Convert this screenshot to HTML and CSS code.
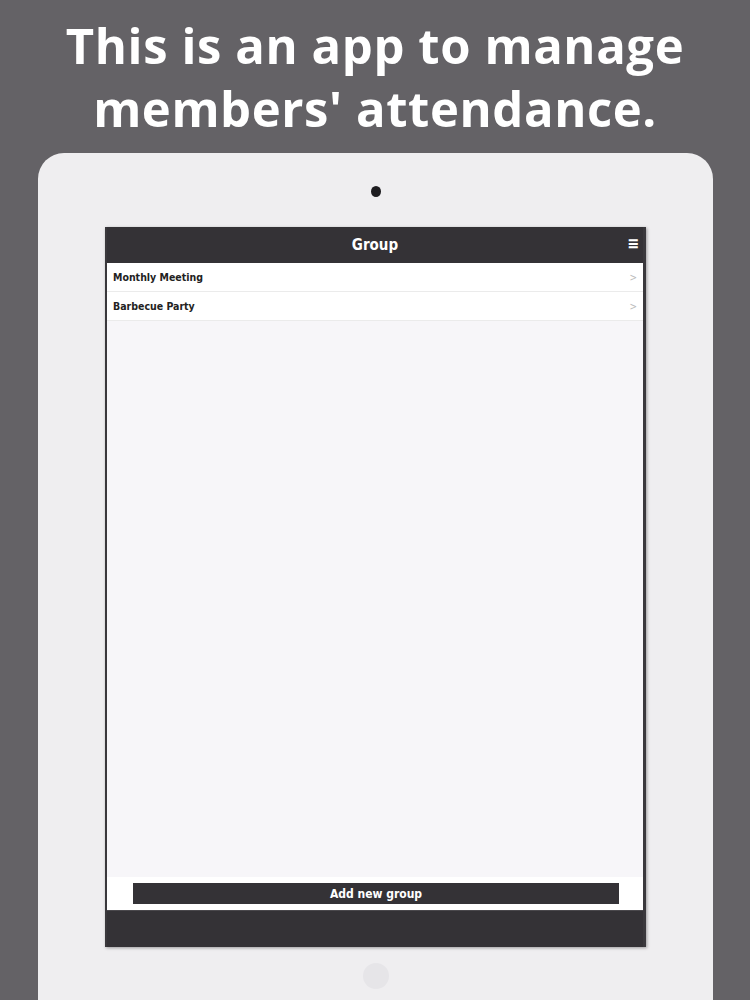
FILE: index.html
```html
<!DOCTYPE html>
<html lang="en">
<head>
    <meta charset="UTF-8">
    <title>Attendance - Group</title>
    <link rel="stylesheet" href="styles.css">
</head>
<body>
    <h1 class="caption">This is an app to manage<br>members' attendance.</h1>

    <div class="device">
        <div class="camera"></div>

        <div class="screen">
            <div class="navbar">
                <span class="nav-title">Group</span>
                <span class="nav-menu">&#8801;</span>
            </div>

            <ul class="group-list">
                <li class="group-item"><span>Monthly Meeting</span><span class="chevron">&gt;</span></li>
                <li class="group-item"><span>Barbecue Party</span><span class="chevron">&gt;</span></li>
            </ul>

            <div class="actions">
                <button class="btn">Add new group</button>
            </div>

            <div class="toolbar"></div>
        </div>

        <div class="home-button"></div>
    </div>
</body>
</html>
```

FILE: styles.css
```css
/* Store screenshot: caption over an iPad frame */
body {
    margin: 0;
    width: 750px;
    height: 1000px;
    overflow: hidden;
    background-color: #646266;
    font-family: "Open Sans", sans-serif;
}

.caption {
    margin: 0;
    padding-top: 14px;
    color: #fff;
    font-size: 49px;
    font-weight: bold;
    line-height: 63px;
    text-align: center;
    letter-spacing: 0.6px;
}

.device {
    display: flex;
    flex-direction: column;
    align-items: center;
    margin: 13px 0 0 38px;
    width: 675px;
    height: 847px;
    background-color: #efeef0;
    border-radius: 26px 26px 0 0;
}

.camera {
    width: 10px;
    height: 11px;
    margin-top: 33px;
    border-radius: 50%;
    background-color: #1e1d20;
}

.screen {
    display: flex;
    flex-direction: column;
    width: 536px;
    height: 720px;
    margin-top: 30px;
    background-color: #f7f6f9;
    border-left: 2px solid #3a383c;
    border-right: 3px solid #3a383c;
    box-shadow: 1px 1px 3px rgba(0, 0, 0, 0.35);
    font-family: "DejaVu Sans Condensed", "DejaVu Sans", sans-serif;
}

.navbar {
    position: relative;
    display: flex;
    align-items: center;
    justify-content: center;
    height: 36px;
    background-color: #343236;
    color: #fff;
}

.nav-title {
    font-size: 15px;
    font-weight: bold;
}

.nav-menu {
    position: absolute;
    right: 4px;
    top: 7px;
    font-size: 16px;
    font-weight: bold;
}

.group-list {
    list-style: none;
    margin: 0;
    padding: 0;
    background-color: #fff;
}

.group-item {
    display: flex;
    justify-content: space-between;
    align-items: center;
    height: 28px;
    padding: 0 6px 0 6px;
    border-bottom: 1px solid #ebebeb;
    font-size: 10.5px;
    font-weight: bold;
    color: #222;
}

.chevron {
    color: #bbb;
    font-weight: normal;
    font-size: 10px;
}

.actions {
    margin-top: auto;
    padding: 6px 0 6px 26px;
    background-color: #fff;
}

.btn {
    display: block;
    width: 486px;
    height: 21px;
    padding: 0;
    border: none;
    background-color: #343236;
    color: #fff;
    font-family: "DejaVu Sans Condensed", "DejaVu Sans", sans-serif;
    font-size: 12px;
    font-weight: bold;
}

.toolbar {
    height: 36px;
    border-top: 1px solid #4a484c;
    background-color: #343236;
}

.home-button {
    width: 26px;
    height: 26px;
    margin-top: 16px;
    border-radius: 50%;
    background-color: #e6e5e8;
}
```
